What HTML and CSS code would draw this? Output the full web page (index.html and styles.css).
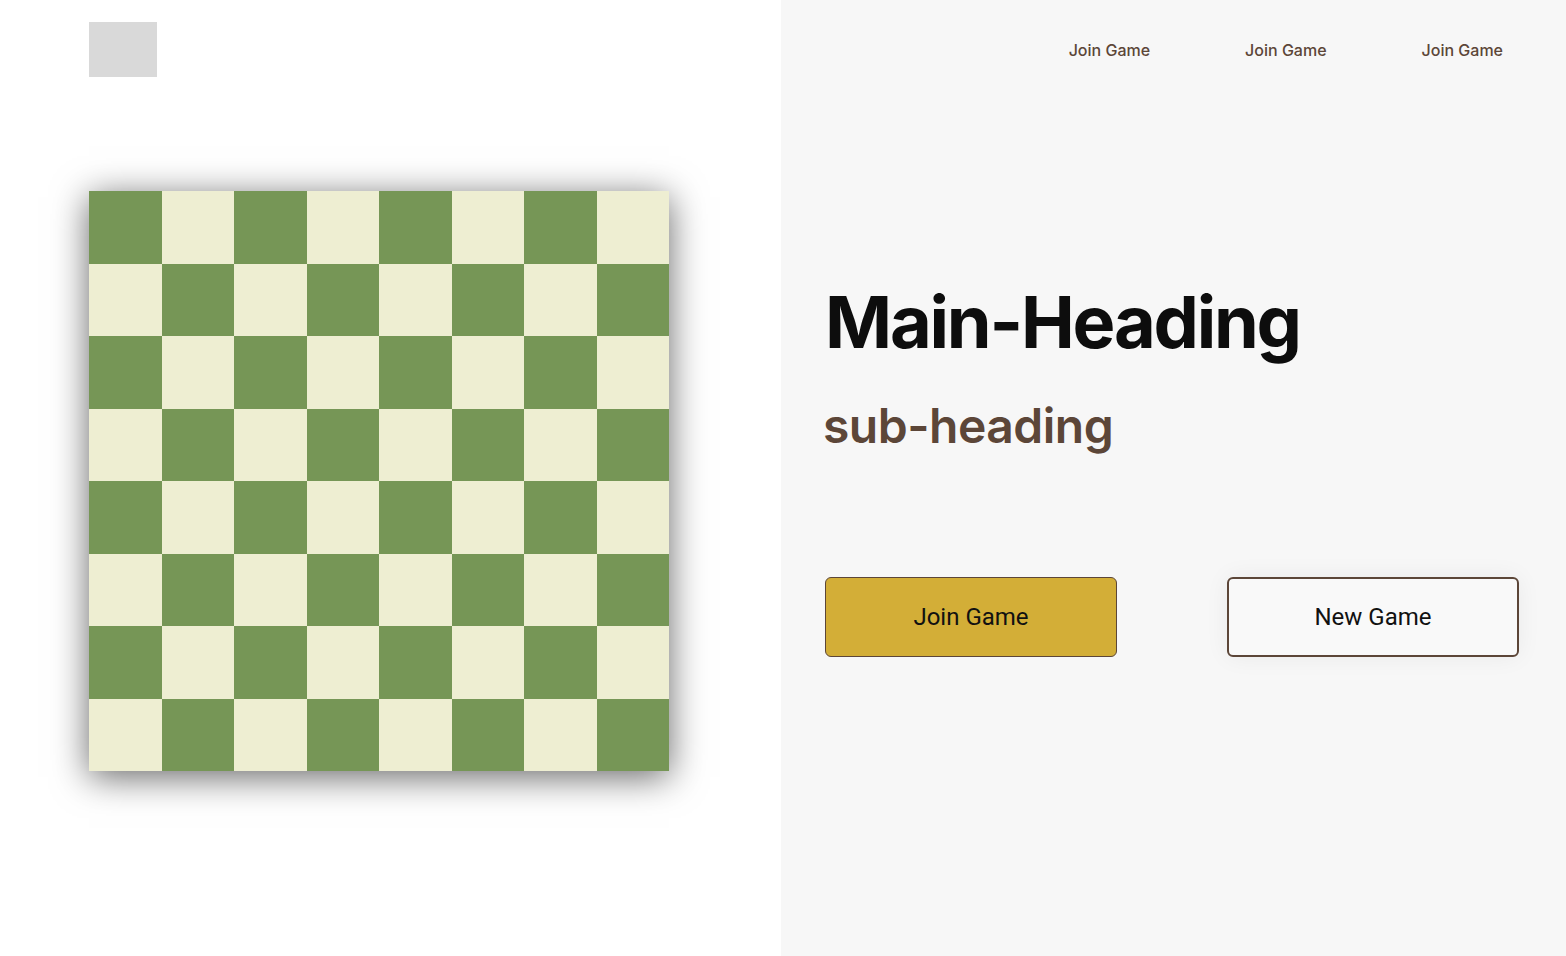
FILE: index.html
```html
<!DOCTYPE html>
<html lang="en">
<head>
<meta charset="utf-8">
<title>Chess</title>
<link rel="stylesheet" href="styles.css">
</head>
<body>
<div class="page">
  <section class="left">
    <div class="logo"></div>
    <div class="board">
      <div class="d"></div><div class="l"></div><div class="d"></div><div class="l"></div><div class="d"></div><div class="l"></div><div class="d"></div><div class="l"></div>
      <div class="l"></div><div class="d"></div><div class="l"></div><div class="d"></div><div class="l"></div><div class="d"></div><div class="l"></div><div class="d"></div>
      <div class="d"></div><div class="l"></div><div class="d"></div><div class="l"></div><div class="d"></div><div class="l"></div><div class="d"></div><div class="l"></div>
      <div class="l"></div><div class="d"></div><div class="l"></div><div class="d"></div><div class="l"></div><div class="d"></div><div class="l"></div><div class="d"></div>
      <div class="d"></div><div class="l"></div><div class="d"></div><div class="l"></div><div class="d"></div><div class="l"></div><div class="d"></div><div class="l"></div>
      <div class="l"></div><div class="d"></div><div class="l"></div><div class="d"></div><div class="l"></div><div class="d"></div><div class="l"></div><div class="d"></div>
      <div class="d"></div><div class="l"></div><div class="d"></div><div class="l"></div><div class="d"></div><div class="l"></div><div class="d"></div><div class="l"></div>
      <div class="l"></div><div class="d"></div><div class="l"></div><div class="d"></div><div class="l"></div><div class="d"></div><div class="l"></div><div class="d"></div>
    </div>
  </section>
  <section class="right">
    <nav class="nav">
      <a class="nav-link" href="#">Join Game</a>
      <a class="nav-link" href="#">Join Game</a>
      <a class="nav-link" href="#">Join Game</a>
    </nav>
    <h1 class="title">Main-Heading</h1>
    <h2 class="subtitle">sub-heading</h2>
    <div class="actions">
      <button class="btn btn-join">Join Game</button>
      <button class="btn btn-new">New Game</button>
    </div>
  </section>
</div>
</body>
</html>
```

FILE: styles.css
```css
* { box-sizing: border-box; }
html, body { margin: 0; padding: 0; }
body {
  font-family: "Inter", "Noto Sans", sans-serif;
  background: #ffffff;
  width: 1566px;
  height: 956px;
  overflow: hidden;
}
.page {
  display: grid;
  grid-template-columns: 781px minmax(0, 1fr);
  height: 956px;
}
.left {
  background: #ffffff;
  padding: 22px 0 0 89px;
}
.logo {
  width: 68px;
  height: 55px;
  background: #d9d9d9;
}
.board {
  margin-top: 114px;
  width: 580px;
  height: 580px;
  display: grid;
  grid-template-columns: repeat(8, 1fr);
  grid-template-rows: repeat(8, 1fr);
  box-shadow: 0 6px 34px rgba(0, 0, 0, 0.6);
}
.d { background: #769656; }
.l { background: #eeeed2; }

.right {
  background: #f7f7f7;
  padding: 22px 48px 0 44px;
  display: flex;
  flex-direction: column;
}
.nav {
  height: 55px;
  padding-right: 15px;
  display: flex;
  justify-content: flex-end;
  align-items: center;
  gap: 95px;
}
.nav-link {
  font-family: "Inter", sans-serif;
  font-weight: 500;
  font-size: 16px;
  line-height: 1;
  color: #5c4638;
  text-decoration: none;
}
.title {
  margin: 209px 0 0 0;
  font-family: "Inter", sans-serif;
  font-weight: 700;
  font-size: 72px;
  line-height: 1;
  letter-spacing: -2.2px;
  color: #0d0d0d;
}
.subtitle {
  margin: 44px 0 0 -2px;
  font-family: "Inter", sans-serif;
  font-weight: 600;
  font-size: 48px;
  line-height: 1;
  letter-spacing: -0.5px;
  color: #5c4638;
}
.actions {
  margin-top: 127px;
  display: flex;
  gap: 110px;
}
.btn {
  flex: 0 0 292px;
  width: 292px;
  height: 80px;
  border-radius: 6px;
  font-family: "Roboto", sans-serif;
  font-size: 24px;
  font-weight: 400;
  color: #111111;
  cursor: pointer;
}
.btn-join {
  background: #d3ae37;
  border: 1px solid #5c4638;
}
.btn-new {
  background: #f9f9f9;
  border: 2px solid #5c4638;
  box-shadow: 0 0 24px rgba(0, 0, 0, 0.06);
}
```
